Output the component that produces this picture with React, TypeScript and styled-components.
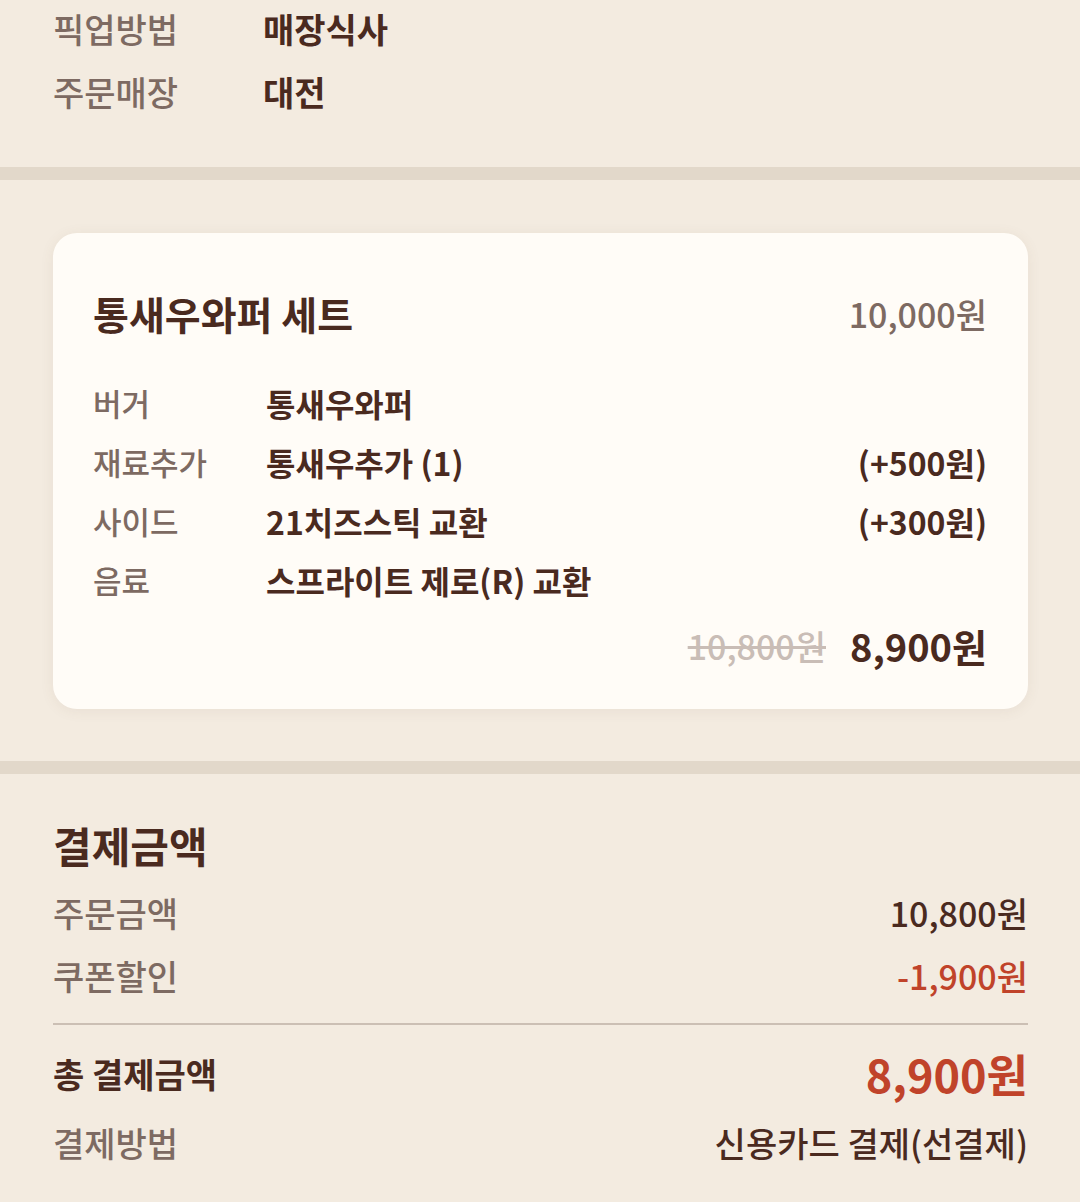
import styled, {createGlobalStyle} from "styled-components";

const GlobalStyle = createGlobalStyle`
	html, body {
		margin: 0;
		padding: 0;
		background: #f3ebe0;
	}
	body {
		font-family: "Noto Sans CJK KR", "Noto Sans", sans-serif;
		color: #4a2a1f;
	}
`

const Page = styled.div`
	width: 1080px;
	min-height: 1202px;
	background: #f3ebe0;
`
const InfoSection = styled.section`
	padding: 0 53px 44px;
	margin-top: -3px;
`
const InfoRow = styled.div`
	display: flex;
	height: 63px;
	align-items: center;
	font-size: 34px;
`
const InfoLabel = styled.div`
	width: 210px;
	color: #7d6a62;
	font-weight: 500;
`
const InfoValue = styled.div`
	font-weight: 700;
	color: #4a2a1f;
`
const Band = styled.div`
	height: 13px;
	background: #e2d8ca;
`
const CardSection = styled.section`
	padding: 53px 52px 52px 53px;
`
const Card = styled.div`
	background: #fffcf7;
	border-radius: 24px;
	padding: 55px 41px 39px 40px;
	box-shadow: 0 2px 14px rgba(120, 90, 60, 0.08);
`
const CardHeader = styled.div`
	display: flex;
	justify-content: space-between;
	align-items: center;
	height: 50px;
	margin-bottom: 35px;
`
const MenuName = styled.div`
	font-size: 39px;
	font-weight: 700;
	color: #4a2a1f;
`
const MenuPrice = styled.div`
	font-size: 34px;
	font-weight: 500;
	color: #7d6a62;
`
const OptionRow = styled.div`
	display: grid;
	grid-template-columns: 173px 1fr auto;
	align-items: center;
	height: 59px;
	font-size: 32px;
`
const OptionLabel = styled.div`
	color: #7d6a62;
	font-weight: 500;
	font-size: 31px;
`
const OptionValue = styled.div`
	color: #4a2a1f;
	font-weight: 700;
`
const PriceRow = styled.div`
	display: flex;
	justify-content: flex-end;
	align-items: center;
	gap: 24px;
	height: 50px;
	margin-top: 11px;
`
const OldPrice = styled.span`
	font-size: 34px;
	font-weight: 500;
	color: #c9bdb6;
	text-decoration: line-through;
	text-decoration-thickness: 3px;
`
const NewPrice = styled.span`
	font-size: 38px;
	font-weight: 700;
	color: #4a2a1f;
`
const PaySection = styled.section`
	padding: 47px 52px 36px 53px;
`
const PayTitle = styled.h2`
	margin: 0 0 12px;
	height: 48px;
	line-height: 48px;
	font-size: 42px;
	font-weight: 700;
	color: #4a2a1f;
`
const PayRow = styled.div<{tall?: boolean}>`
	display: flex;
	justify-content: space-between;
	align-items: center;
	height: ${props => props.tall ? 66 : 63}px;
	font-size: 34px;
`
const PayLabel = styled.div<{strong?: boolean}>`
	color: ${props => props.strong ? "#4a2a1f" : "#7d6a62"};
	font-weight: ${props => props.strong ? 700 : 500};
`
const PayValue = styled.div<{tone?: "red" | "dark"; big?: boolean}>`
	color: ${props => props.tone === "red" ? "#c0432a" : "#4a2a1f"};
	font-weight: ${props => props.big ? 700 : 500};
	font-size: ${props => props.big ? 45 : 34}px;
`
const Divider = styled.hr`
	margin: 16px 0 15px;
	border: 0;
	height: 2px;
	background: #cbbfb4;
`
const MethodRow = styled(PayRow)`
	margin-top: 5px;
`

const options = [
	{label: "버거", value: "통새우와퍼", extra: ""},
	{label: "재료추가", value: "통새우추가 (1)", extra: "(+500원)"},
	{label: "사이드", value: "21치즈스틱 교환", extra: "(+300원)"},
	{label: "음료", value: "스프라이트 제로(R) 교환", extra: ""},
]

export default function App() {
	return (
		<Page>
			<GlobalStyle/>
			<InfoSection>
				<InfoRow>
					<InfoLabel>픽업방법</InfoLabel>
					<InfoValue>매장식사</InfoValue>
				</InfoRow>
				<InfoRow>
					<InfoLabel>주문매장</InfoLabel>
					<InfoValue>대전</InfoValue>
				</InfoRow>
			</InfoSection>
			<Band/>
			<CardSection>
				<Card>
					<CardHeader>
						<MenuName>통새우와퍼 세트</MenuName>
						<MenuPrice>10,000원</MenuPrice>
					</CardHeader>
					{options.map(option => (
						<OptionRow key={option.label}>
							<OptionLabel>{option.label}</OptionLabel>
							<OptionValue>{option.value}</OptionValue>
							<OptionValue>{option.extra}</OptionValue>
						</OptionRow>
					))}
					<PriceRow>
						<OldPrice>10,800원</OldPrice>
						<NewPrice>8,900원</NewPrice>
					</PriceRow>
				</Card>
			</CardSection>
			<Band/>
			<PaySection>
				<PayTitle>결제금액</PayTitle>
				<PayRow>
					<PayLabel>주문금액</PayLabel>
					<PayValue>10,800원</PayValue>
				</PayRow>
				<PayRow>
					<PayLabel>쿠폰할인</PayLabel>
					<PayValue tone="red">-1,900원</PayValue>
				</PayRow>
				<Divider/>
				<PayRow tall>
					<PayLabel strong>총 결제금액</PayLabel>
					<PayValue tone="red" big>8,900원</PayValue>
				</PayRow>
				<MethodRow>
					<PayLabel>결제방법</PayLabel>
					<PayValue>신용카드 결제(선결제)</PayValue>
				</MethodRow>
			</PaySection>
		</Page>
	)
}
